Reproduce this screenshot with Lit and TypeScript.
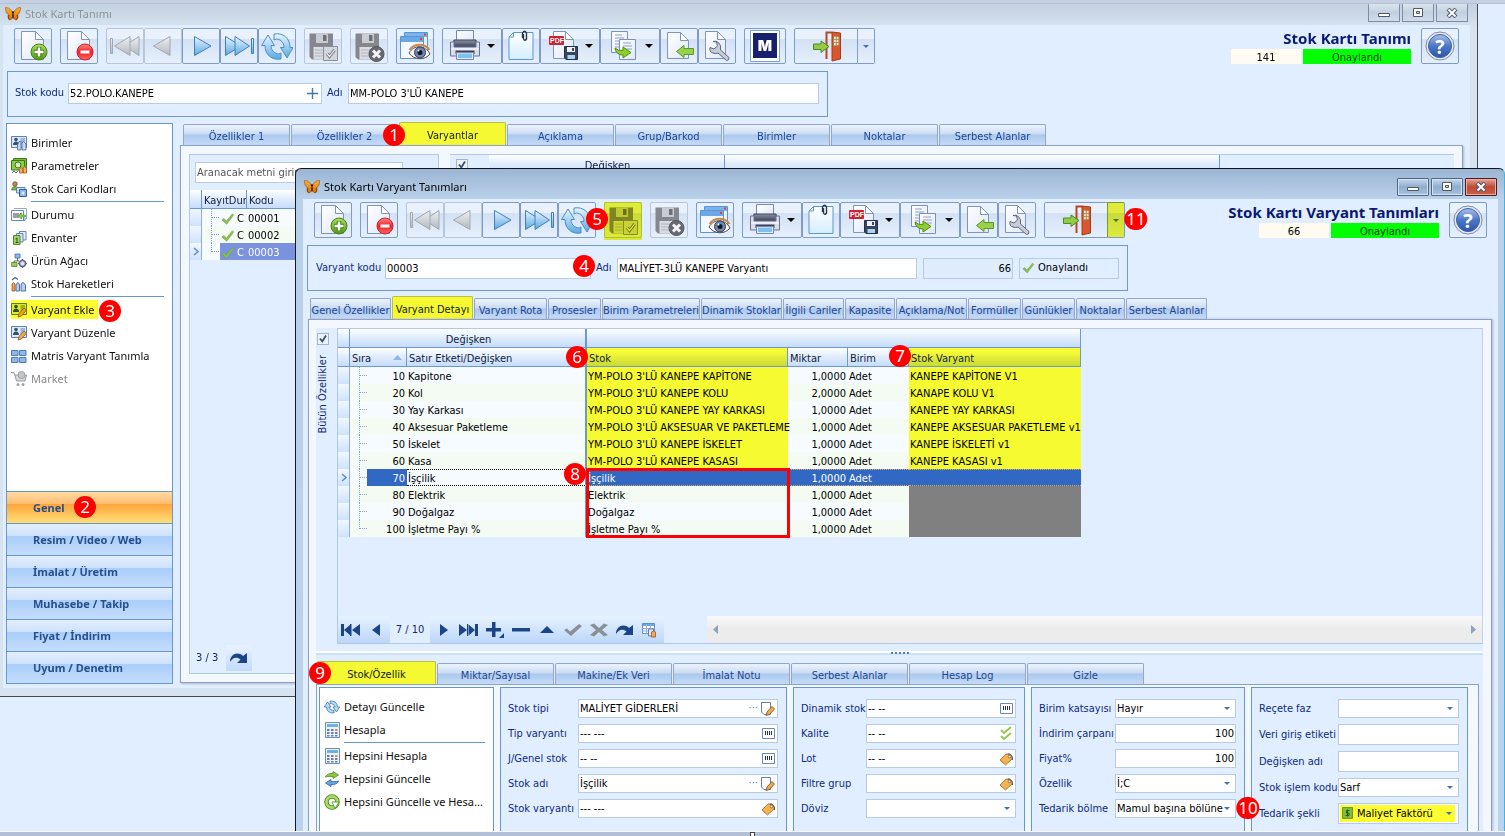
import { LitElement, html, svg, css, nothing } from "lit";
import { customElement, property } from "lit/decorators.js";
import { classMap } from "lit/directives/class-map.js";
import { styleMap } from "lit/directives/style-map.js";

/* ---------- shared look ---------- */

const base = css`
  * { box-sizing: border-box; }
  :host { font: 11px/14px "DejaVu Sans Condensed", "Noto Sans", sans-serif; color: #000; }
  button, input, select { font: inherit; color: inherit; margin: 0; }
  button { cursor: default; padding: 0; }
  svg { display: block; flex: none; }
  .row { display: flex; align-items: center; }
  input[type="text"], select {
    border: 1px solid #b5cbe8; background: #fff; height: 19px; padding: 0 1px; min-width: 0;
    border-radius: 0; outline: 0;
  }
  label { color: #0d2b80; white-space: nowrap; }
`;

const defs = html`<svg width="0" height="0" style="position:absolute" aria-hidden="true">
  <defs>
    <linearGradient id="blue" x1="0" y1="0" x2="0" y2="1"><stop offset="0" stop-color="#eaf6ff"/><stop offset="1" stop-color="#5aa9e0"/></linearGradient>
    <linearGradient id="gray" x1="0" y1="0" x2="0" y2="1"><stop offset="0" stop-color="#eceff3"/><stop offset="1" stop-color="#b4b8be"/></linearGradient>
    <linearGradient id="paper" x1="0" y1="0" x2="1" y2="1"><stop offset="0" stop-color="#ffffff"/><stop offset="1" stop-color="#dfe8f6"/></linearGradient>
    <linearGradient id="sheet" x1="0" y1="0" x2="0" y2="1"><stop offset="0" stop-color="#ffffff"/><stop offset="1" stop-color="#d5edff"/></linearGradient>
    <linearGradient id="green" x1="0" y1="0" x2="0" y2="1"><stop offset="0" stop-color="#a8e05a"/><stop offset="1" stop-color="#4f9a12"/></linearGradient>
    <linearGradient id="red" x1="0" y1="0" x2="0" y2="1"><stop offset="0" stop-color="#ff8a80"/><stop offset="0.5" stop-color="#f0202c"/><stop offset="1" stop-color="#ff6a60"/></linearGradient>
    <linearGradient id="steel" x1="0" y1="0" x2="0" y2="1"><stop offset="0" stop-color="#8d93a6"/><stop offset="1" stop-color="#3c4257"/></linearGradient>
    <linearGradient id="globe" x1="0" y1="0" x2="0" y2="1"><stop offset="0" stop-color="#a9c2ee"/><stop offset="0.5" stop-color="#4a76c8"/><stop offset="1" stop-color="#2f56ad"/></linearGradient>
    <linearGradient id="wing" x1="0" y1="0" x2="0" y2="1"><stop offset="0" stop-color="#ffb52e"/><stop offset="1" stop-color="#e06a08"/></linearGradient>
  </defs>
</svg>`;

/* ---------- large toolbar pictures, 32 x 32 ---------- */

const page = svg`<path d="M4.5 1.5H18.5L26.5 9.5V29.5H4.5Z" fill="url(#paper)" stroke="#8093bd"/><path d="M18.5 1.5V9.5H26.5Z" fill="#fff" stroke="#8093bd"/>`;
const disk = svg`<path d="M2.5 3.5H26V29.5H5L2.5 27Z" fill="#84888e"/><path d="M9 3.500H21V13H9Z" fill="#c9cdd2"/><path d="M16 5H19.500V11H16Z" fill="#6d7177"/><path d="M6.500 17H21.500V29.500H6.500Z" fill="#d8dbdf"/><path d="M8 20H20M8 23H20M8 26H20" stroke="#b2b6bb"/>`;

const big: Record<string, unknown> = {
  add: svg`${page}<circle cx="22" cy="22" r="8" fill="url(#green)" stroke="#4b7d22"/><path d="M22 17V27M17 22H27" stroke="#3f7a12" stroke-width="4.500"/><path d="M22 17.500V26.500M17.500 22H26.500" stroke="#fff" stroke-width="2.500"/>`,
  remove: svg`${page}<circle cx="22" cy="22" r="8" fill="url(#red)" stroke="#c3242c"/><path d="M17.500 22H26.500" stroke="#fff" stroke-width="3"/>`,
  first: svg`<g fill="url(#gray)" stroke="#a3a8b0"><path d="M30 6.500V25.500L15.500 16Z"/><path d="M21 6.500V25.500L5.500 16Z"/><path d="M1.500 8.500H3.500V23.500H1.500Z"/></g>`,
  prev: svg`<path d="M23 6.500V25.500L6.500 16Z" fill="url(#gray)" stroke="#a3a8b0"/>`,
  next: svg`<path d="M9.500 6.500V25.500L26 16Z" fill="url(#blue)" stroke="#3f7fc0"/>`,
  last: svg`<g fill="url(#blue)" stroke="#3f7fc0"><path d="M2.500 6.500V25.500L18 16Z"/><path d="M12 6.500V25.500L26.500 16Z"/><path d="M28.500 8.500H30.500V23.500H28.500Z"/></g>`,
  refresh: svg`<g fill="url(#blue)" stroke="#4a8fc6"><path d="M7 5L13.500 15.500H10C10 20 13 23.500 18 24L20 23V29C11 30.500 4 25 4 15.500H.5Z"/><path d="M26 28L19.500 17.500H23C23 12.500 20 9.500 15.500 9L13 10V4C22 2.500 29 8 29 17.500H32Z"/></g>`,
  save: svg`${disk}<path d="M16.500 16.500H30.500V30.500H16.500Z" fill="#d3d6da" stroke="#8c9096"/><path d="M20 23.500L22.500 26.500L27.500 20" fill="none" stroke="#787c82" stroke-width="3"/><path d="M20 23.500L22.500 26.500L27.500 20" fill="none" stroke="#f2f4f6" stroke-width="1.200"/>`,
  cancel: svg`${disk}<circle cx="23.500" cy="24" r="7.500" fill="#666a70" stroke="#53575d"/><path d="M20 20.500L27 27.500M27 20.500L20 27.500" stroke="#f4f4f4" stroke-width="3"/>`,
  preview: svg`<path d="M5.500 2.500H28.500V22H5.500Z" fill="#e9f3ff" stroke="#5b94d2"/><path d="M6 3H28V7H6Z" fill="#79b4ec"/><path d="M1.500 6.500H24.500V28.500H1.500Z" fill="#f2f8ff" stroke="#5b94d2"/><path d="M2 7H24V12H2Z" fill="#6aa9e6"/><path d="M25 3.500H27V5.500H25ZM21 8H23V10H21Z" fill="#e0402a"/><path d="M10 23C15 14.500 26 14.500 31 24C26 30.500 15 30.500 10 23Z" fill="#f4f4f6" stroke="#5c4a42"/><path d="M10.500 20C15 13 26 13 30.500 20" fill="none" stroke="#c98850" stroke-width="2"/><circle cx="21" cy="22.500" r="5.500" fill="#6f86ad" stroke="#33415e"/><circle cx="21" cy="22.500" r="2.500" fill="#101728"/><circle cx="19.500" cy="20.500" r="1" fill="#fff"/>`,
  print: svg`<path d="M7.500 .5H24.500V12H7.500Z" fill="url(#paper)" stroke="#7d86a6"/><path d="M5 10H27L28 17H4Z" fill="url(#steel)" stroke="#3a4056"/><path d="M1.500 12H5V17H27V12H30.500V26H1.500Z" fill="#d8dded" stroke="#6a7290"/><path d="M2 19H30" stroke="#fff"/><path d="M6.500 20.500H25.500V24H6.500Z" fill="#3c4257"/><path d="M7.500 22.500H24.500V29.500H7.500Z" fill="#dff0fd" stroke="#7d86a6"/><path d="M9 23.500H23V28H9Z" fill="#7fc0ee"/>`,
  clip: svg`<path d="M8.500 2.500H28V29.500H4V7Z" fill="url(#sheet)" stroke="#5b97d0"/><path d="M8.500 2.500V7H4Z" fill="#fff" stroke="#5b97d0"/><path d="M17.500 8V3Q19.500 -.5 21.500 3V9Q19.800 11.500 18.500 9V4" fill="none" stroke="#26364f" stroke-width="1.400"/>`,
  pdf: svg`<path d="M6.500 1.500H18.500L26.500 9.500V28.500H6.500Z" fill="url(#paper)" stroke="#8093bd"/><path d="M18.500 1.500V9.500H26.500Z" fill="#fff" stroke="#8093bd"/><rect x="2" y="6" width="15" height="9" rx="1" fill="#cf2230"/><text x="3" y="13" font-size="7" font-weight="700" font-family="Liberation Sans, sans-serif" fill="#fff">PDF</text><path d="M17.500 16.500H30.500V29.500H19L17.500 28Z" fill="#39445e" stroke="#262f45"/><path d="M20 17H28V22H20Z" fill="#eef2f8"/><path d="M25 18H27V21H25Z" fill="#39445e"/><path d="M20.500 25H28V29H20.500Z" fill="#a9d4f2"/>`,
  copy: svg`<path d="M4.500 1.500H20.500V22.500H4.500Z" fill="url(#paper)" stroke="#7b8fc0"/><path d="M8 5H15M8 8H17M8 11H17M8 14H17M8 17H15" stroke="#8ea1cc"/><path d="M12.500 9.500H28.500V29.500H12.500Z" fill="url(#paper)" stroke="#7b8fc0"/><path d="M16 13H24M16 16H25M16 19H25" stroke="#8ea1cc"/><path d="M8 18Q11 21 16 20.500V17L24 22.500L16 28V25Q9 25 8 18Z" fill="#8fce2c" stroke="#4f8a14"/>`,
  back: svg`<path d="M4.500 2.500H17.500L25.500 10.500V28.500H4.500Z" fill="url(#paper)" stroke="#8093bd"/><path d="M17.500 2.500V10.500H25.500Z" fill="#fff" stroke="#8093bd"/><path d="M13.500 21.500L21 15.500V18.500H30.500V24.500H21V27.500Z" fill="#9ad04c" stroke="#5a9a28"/>`,
  tools: svg`<path d="M4.500 1.500H16.500L24.500 9.500V28.500H4.500Z" fill="url(#paper)" stroke="#8093bd"/><path d="M16.500 1.500V9.500H24.500Z" fill="#fff" stroke="#8093bd"/><path d="M12 11.500L15.500 12L16.500 16L13 19L9 17.500Q8 22 12 23Q15 24 17 23L25.500 30.500Q28.500 30.500 28 27.500L19.500 20Q20.500 15 17.500 12.500Q15 10.500 12 11.500Z" fill="#c6ccd8" stroke="#5e6780"/>`,
  m: svg`<path d="M1.500 .5H30.500V31.500H1.500Z" fill="#fff" stroke="#7f9fd0"/><path d="M4 3H28V28H4Z" fill="#18206e"/><text x="16" y="21" text-anchor="middle" font-size="15" font-weight="900" font-family="Inter, sans-serif" fill="#fff">M</text>`,
  exit: svg`<path d="M16.500 29V2.500H22" fill="none" stroke="#b8472a" stroke-width="2"/><path d="M22 2L30.500 3V29L22 31Z" fill="#d9572a" stroke="#a83a18"/><path d="M23.500 6L29 6.500V15.500L23.500 16Z" fill="#f3e3c4" stroke="#b08050"/><path d="M26.300 6V16M23.500 9.500H29M23.500 12.500H29" stroke="#b08050" stroke-width=".8"/><path d="M3.500 14H11V11L19 16.500L11 22.500V19.500H3.500Z" fill="#93cc44" stroke="#4c8a20"/>`,
  help: svg`<circle cx="16" cy="16" r="14" fill="#e8ecf4" stroke="#7e8cab"/><circle cx="16" cy="16" r="11.500" fill="url(#globe)" stroke="#41609f"/><text x="16" y="23.500" text-anchor="middle" font-size="20" font-weight="700" font-family="Open Sans, sans-serif" fill="#fff">?</text>`,
};

const bigIcon = (n: string) => html`<svg width="32" height="32" viewBox="0 0 32 32" aria-hidden="true">${big[n]}</svg>`;

/* ---------- small pictures, 16 x 16 ---------- */

const pencil = svg`<path d="M7 15L8 11.500L13 6L15.500 8L10.500 14Z" fill="#f2a94a" stroke="#8a5526" stroke-width=".8"/>`;
const card = svg`<path d="M.5 1.500H15.500V12.500H.5Z" fill="#dfeaf9" stroke="#5b80b8"/><circle cx="5" cy="4.500" r="1.800" fill="#33517f"/><path d="M2 10Q2 6.500 5 6.500Q8 6.500 8 10Z" fill="#33517f"/><path d="M9.500 4H14M9.500 6H14M9.500 8H14" stroke="#5b80b8"/>`;
const calc = svg`<path d="M1.500 .5H15.500V15.500H1.500Z" fill="#eef3fb" stroke="#6d8cc0"/><path d="M3 2H14V5H3Z" fill="#6db0e4"/><g fill="#6a7fae"><path d="M3 7H5.500V9H3ZM7 7H9.500V9H7ZM3 10H5.500V12H3ZM7 10H9.500V12H7ZM3 13H5.500V14.500H3ZM7 13H9.500V14.500H7ZM11 13H13.500V14.500H11ZM11 10H13.500V12H11Z"/></g><path d="M11 7H13.500V9H11Z" fill="#e08a2c"/>`;
const check = svg`<path d="M1 9L3.500 7.500L6 10.500L13 2L14.500 3.500L6.500 14Z" fill="#8cc152" stroke="#6a9c38" stroke-width=".6"/>`;

const small: Record<string, unknown> = {
  birimler: svg`${card}<path d="M6.500 15V10L8 6.500H10V15ZM11 15V8L12.500 6.500L15 9V15Z" fill="#c7d8ef" stroke="#44679f" stroke-width=".8"/>`,
  param: svg`<path d="M2.500 .5H15.500V10H2.500Z" fill="#7dbb3c" stroke="#3f7a18"/><path d="M.5 2.500H13.500V12H.5Z" fill="#8fcb4c" stroke="#3f7a18"/><circle cx="7" cy="7" r="3" fill="#d6ecb4" stroke="#3f7a18"/><path d="M8.500 15V11Q10 8 12 11V15ZM12 15V10Q13.500 7.500 15.500 10V15Z" fill="#f4b060" stroke="#a3561c" stroke-width=".8"/><path d="M1 15L3 13L5 15L7 13" stroke="#3c6fb8" fill="none"/>`,
  cari: svg`<circle cx="4" cy="3" r="2.300" fill="#c08a50" stroke="#5c4426" stroke-width=".7"/><path d="M.5 9Q1 5.500 4 5.500Q7 5.500 7.500 9Z" fill="#7cb548" stroke="#447a20" stroke-width=".7"/><path d="M5.500 6.500H14V12H5.500Z" fill="#cfe0f5" stroke="#5b80b8"/><path d="M8.500 8.500H15.500V15.500H8.500Z" fill="#8bb6ea" stroke="#2f5fa8"/><path d="M10.500 12H13.500M12 10.500V14" stroke="#fff"/>`,
  durum: svg`<path d="M.5 3.500H12.500V13.500H.5Z" fill="#fff" stroke="#6c86b8"/><path d="M3 6V11M5 6V11M7 6V11M9.500 6V11" stroke="#2c3c60"/><path d="M3 1.500H15.500V12" fill="none" stroke="#8fa8d2"/><path d="M7 9L10.500 6V8H14.500V10H10.500V12Z" fill="#93cc44" stroke="#5a9a28" stroke-width=".7"/><path d="M5 13.500H14V11" fill="none" stroke="#4a8fd0"/>`,
  envanter: svg`<path d="M8.500 1.500H15V10H8.500Z" fill="#e6effb" stroke="#6285bb"/><path d="M5.500 3.500H12V12H5.500Z" fill="#d6e4f7" stroke="#6285bb"/><path d="M2.500 5.500H9V14.500H2.500Z" fill="#a8d26a" stroke="#4c8a28"/><path d="M4.500 12.500H7.500M6 12.500V8L4.500 8.800" stroke="#2d5c12" fill="none"/>`,
  agac: svg`<path d="M4 1H9V5H4Z" fill="#8db8ec" stroke="#3d6cb0" stroke-width=".8"/><path d="M6.500 5V8M3 10V8H8" stroke="#667" fill="none"/><path d="M.7 9.500H6V13.500H.7Z" fill="#9ccc58" stroke="#4c8a28" stroke-width=".8"/><circle cx="11.500" cy="10.500" r="3" fill="#e2e6ee" stroke="#5b6680" stroke-width="1.400"/><path d="M11.500 6V8M11.500 13V15M7 10.500H9M14 10.500H16" stroke="#5b6680" stroke-width="1.400"/>`,
  hareket: svg`<path d="M1 4L4 1.500L7 3.500" stroke="#3c6fb8" fill="none" stroke-width="1.200"/><path d="M1 15V8Q2.500 5 4 8V15Z" fill="#f0a050" stroke="#a3561c" stroke-width=".8"/><path d="M5 15V9Q7 4 8.500 9V15ZM10 15V9Q11.500 4 14.500 9V15Z" fill="#b9cfee" stroke="#44679f" stroke-width=".9"/>`,
  ekle: svg`${card}${pencil}`,
  duzenle: svg`${card}${pencil}`,
  matris: svg`<g fill="#8fb6e4" stroke="#4f7dba"><path d="M.5 2.500H7V7.500H.5ZM8.500 2.500H15V7.500H8.500ZM.5 9.500H7V14.500H.5ZM8.500 9.500H15V14.500H8.500Z"/></g>`,
  market: svg`<path d="M0 1.500H3L5.500 10H14L15.500 4H4" fill="#d6d8da" stroke="#9a9da0"/><circle cx="10.500" cy="4" r="3.500" fill="#c4c6c8" stroke="#a0a3a6"/><circle cx="7" cy="13.500" r="1.500" fill="#a0a3a6"/><circle cx="12" cy="13.500" r="1.500" fill="#a0a3a6"/>`,
  refresh: svg`<g fill="#b4dbf6" stroke="#3f78b2" stroke-width=".8"><path d="M3.500 3L7 8H5Q5.500 11 9 11.500L10 11V14Q3 14.500 2.500 8H.3Z"/><path d="M12.500 13L9 8H11Q10.500 5 7 4.500L6 5V2Q13 1.500 13.500 8H15.700Z"/></g>`,
  calc,
  sync: svg`<path d="M1.500 6Q3 2 9 2.500V.5L14.500 4L9 7.500V5.500Q5 5 1.500 6Z" fill="#8ccc3c" stroke="#4c8a20" stroke-width=".8"/><path d="M14.500 10Q13 14 7 13.500V15.500L1.500 12L7 8.500V10.500Q11 11 14.500 10Z" fill="#6aa6de" stroke="#2c62a4" stroke-width=".8"/>`,
  spin: svg`<circle cx="8" cy="8" r="5.500" fill="none" stroke="#4c8a20" stroke-width="4.500"/><circle cx="8" cy="8" r="5.500" fill="none" stroke="#a4dc60" stroke-width="2.800"/><path d="M8 8H15L11 14.500Z" fill="#fff" stroke="#4c8a20" stroke-width=".8"/>`,
  check,
  edit: svg`<path d="M1.500 1.500H10.500V13.500H4L1.500 11Z" fill="#fff" stroke="#6b7fa8"/><path d="M6 14.500L7 11L12 5.500L14.500 8L9.500 13.500Z" fill="#f2a94a" stroke="#7a4a20" stroke-width=".8"/>`,
  bars: svg`<path d="M2.500 2.500H14.500V12.500H2.500Z" fill="#fff" stroke="#7186b8"/><path d="M5.500 5V9M7.500 5V9M9.500 5V9M11.500 5V9" stroke="#26304c"/>`,
  checks: svg`<path d="M3 4L6 7L13 1M3 10L6 13L13 7" fill="none" stroke="#93c94e" stroke-width="2"/>`,
  tag: svg`<path d="M2 9L8 3H12L14 6V8L7.500 14Z" fill="#f4b250" stroke="#9a6420" stroke-width=".8"/><circle cx="11.500" cy="5.500" r="1.300" fill="#fff" stroke="#6a4a20" stroke-width=".7"/><path d="M10 3Q15 3 14.500 9" stroke="#556" fill="none"/>`,
};

const smallIcon = (n: string) => html`<svg width="16" height="16" viewBox="0 0 16 16" aria-hidden="true">${small[n]}</svg>`;

const butterfly = html`<svg width="16" height="16" viewBox="0 0 16 16" aria-hidden="true">
  <path d="M8 7C6 3 3 1.500 .5 1.500C.5 5 1.500 8 3.500 8.500C2.500 10 3 14 5 14C7 14 7.500 11 8 9C8.500 11 9 14 11 14C13 14 13.500 10 12.500 8.500C14.500 8 15.500 5 15.500 1.500C13 1.500 10 3 8 7Z" fill="url(#wing)" stroke="#8a4a10" stroke-width=".6"/>
  <path d="M7 5.500L8 7V12.500M9 5.500L8 7" stroke="#2a1608" stroke-width="1.200" fill="none"/><path d="M11.500 13.500C12.500 12.500 13 11 12 9M4.500 13.500C3.500 12.500 3 11 4 9" stroke="#7a3a08" fill="none"/></svg>`;

const curl = html`<svg width="20" height="14" viewBox="0 0 20 14" aria-hidden="true"><path d="M1 11C1 3 9 0 14 5L18 2V12H8L11.500 8.500C8 5.500 4 6 1 11Z" fill="#1c4587"/></svg>`;

/* ---------- toolbar ---------- */

interface Tool { icon: string; kind?: "menu" | "exit" | "wide"; off?: boolean; mark?: boolean; label: string }

const toolGroups = (brand: boolean, mark: boolean): Tool[][] => [
  [{ icon: "add", label: "Yeni" }],
  [{ icon: "remove", label: "Sil" }],
  [
    { icon: "first", label: "İlk", off: true }, { icon: "prev", label: "Önceki", off: true },
    { icon: "next", label: "Sonraki" }, { icon: "last", label: "Son" }, { icon: "refresh", label: "Yenile" },
  ],
  [{ icon: "save", label: "Kaydet", off: true, mark }],
  [{ icon: "cancel", label: "Vazgeç", off: true }],
  [{ icon: "preview", label: "Önizleme" }],
  [
    { icon: "print", label: "Yazdır", kind: "menu" }, { icon: "clip", label: "Ekler" },
    { icon: "pdf", label: "PDF", kind: "menu" }, { icon: "copy", label: "Kopyala", kind: "menu" },
    { icon: "back", label: "Geri al" }, { icon: "tools", label: "Ayarlar" },
  ],
  ...(brand ? [[{ icon: "m", label: "M", kind: "wide" } as Tool]] : []),
  [{ icon: "exit", label: "Çıkış", kind: "exit", mark }],
];

@customElement("erp-toolbar")
export class ErpToolbar extends LitElement {
  @property() heading = "";
  @property() code = "";
  @property({ type: Boolean }) brand = false;
  @property({ type: Boolean }) marked = false;

  static styles = [base, css`
    :host { display: flex; justify-content: space-between; padding: 3px 11px 0; }
    .tools { display: flex; gap: 8px; }
    .group { display: flex; }
    button {
      width: 38px; height: 36px; display: flex; align-items: center; justify-content: center; position: relative;
      border: 1px solid #7f9cc8; border-radius: 2px;
      background: linear-gradient(#e9f1fc 0 28%, #d3e1f4 30%, #e6f0fd);
    }
    button.off { border-color: #b9c5d8; }
    button.wide { width: 42px; }
    button.menu { width: 60px; justify-content: flex-start; padding-left: 6px; gap: 6px; }
    button.exit { width: 64px; border-radius: 2px 0 0 2px; }
    button.drop { width: 17px; border-left: 0; border-radius: 0 2px 2px 0; }
    button.mark::after { content: ""; position: absolute; inset: -1px -1px -3px; background: #f4f93a; mix-blend-mode: multiply; }
    button.drop.mark::after { inset: -1px 0 0 -1px; }
    .status { display: flex; gap: 10px; }
    h1 { margin: 0 0 1px; font: 700 15px/20px "Noto Sans", sans-serif; color: #0a1a70; text-align: right; white-space: nowrap; }
    .chips { display: flex; justify-content: flex-end; gap: 2px; line-height: 15px; text-align: center; }
    .chips span { padding-top: 1px; height: 15px; }
    .code { width: 70px; background: #fffbf0; }
    .ok { width: 108px; background: #0f0; color: #063a06; }
  `];

  private tool(t: Tool) {
    const cls = { off: !!t.off, menu: t.kind === "menu", wide: t.kind === "wide", exit: t.kind === "exit", mark: !!t.mark && t.kind !== "exit" };
    return html`<button class=${classMap(cls)} aria-label=${t.label}>${bigIcon(t.icon)}
      ${t.kind === "menu" ? html`<svg width="8" height="4" viewBox="0 0 8 4"><path d="M0 0H8L4 4Z"/></svg>` : nothing}</button>
      ${t.kind === "exit" ? html`<button class=${classMap({ drop: true, mark: !!t.mark })} aria-label="Seçenekler"><svg width="6" height="3" viewBox="0 0 6 3"><path d="M0 0H6L3 3Z" fill="#4a6fa8"/></svg></button>` : nothing}`;
  }

  render() {
    return html`${defs}
      <div class="tools">${toolGroups(this.brand, this.marked).map(g => html`<div class="group">${g.map(t => this.tool(t))}</div>`)}</div>
      <div class="status">
        <div><h1>${this.heading}</h1><div class="chips"><span class="code">${this.code}</span><span class="ok">Onaylandı</span></div></div>
        <button aria-label="Yardım">${bigIcon("help")}</button>
      </div>`;
  }
}

/* ---------- tab strip ---------- */

interface Tab { text: string; width: number; active?: boolean }

@customElement("erp-tabs")
export class ErpTabs extends LitElement {
  @property({ attribute: false }) tabs: Tab[] = [];

  static styles = [base, css`
    :host { display: flex; align-items: flex-end; height: 23px; }
    button {
      height: 21px; border: 1px solid #93a6cb; border-bottom: 0; border-radius: 2px 2px 0 0; margin-right: 1px;
      background: linear-gradient(#e8f0fb 0 8%, #c9dbf3 45%, #abc8ee 50%, #c6dcf7); color: #1f4592; white-space: nowrap;
      flex: none; overflow: hidden; padding-top: 3px;
    }
    button.active { height: 23px; background: #f5f932; border-color: #b9bf4c; color: #10200a; }
  `];

  render() {
    return this.tabs.map(t => html`<button role="tab" class=${classMap({ active: !!t.active })} style=${styleMap({ width: `${t.width - 1}px` })}>${t.text}</button>`);
  }
}

/* ---------- data ---------- */

const menu: (null | [string, string, string?])[] = [
  ["birimler", "Birimler"], ["param", "Parametreler"], ["cari", "Stok Cari Kodları"], null,
  ["durum", "Durumu"], ["envanter", "Envanter"], ["agac", "Ürün Ağacı"], ["hareket", "Stok Hareketleri"], null,
  ["ekle", "Varyant Ekle", "mark"], ["duzenle", "Varyant Düzenle"], ["matris", "Matris Varyant Tanımla"], ["market", "Market", "off"],
];

const sections = ["Genel", "Resim / Video / Web", "İmalat / Üretim", "Muhasebe / Takip", "Fiyat / İndirim", "Uyum / Denetim"];

const mainTabs: Tab[] = ["Özellikler 1", "Özellikler 2", "Varyantlar", "Açıklama", "Grup/Barkod", "Birimler", "Noktalar", "Serbest Alanlar"]
  .map(text => ({ text, width: 108, active: text === "Varyantlar" }));

const dialogTabs: Tab[] = ([
  ["Genel Özellikler", 82], ["Varyant Detayı", 82], ["Varyant Rota", 74], ["Prosesler", 54], ["Birim Parametreleri", 99],
  ["Dinamik Stoklar", 82], ["İlgili Cariler", 62], ["Kapasite", 51], ["Açıklama/Not", 72], ["Formüller", 54],
  ["Günlükler", 54], ["Noktalar", 50], ["Serbest Alanlar", 82],
] as [string, number][]).map(([text, width]) => ({ text, width, active: text === "Varyant Detayı" }));

const detailTabs: Tab[] = ["Stok/Özellik", "Miktar/Sayısal", "Makine/Ek Veri", "İmalat Notu", "Serbest Alanlar", "Hesap Log", "Gizle"]
  .map((text, i) => ({ text, width: i ? 118 : 120, active: !i }));

const lines: [number, string, string, string, string][] = [
  [10, "Kapitone", "YM-POLO 3'LÜ KANEPE KAPİTONE", "1,0000", "KANEPE KAPİTONE V1"],
  [20, "Kol", "YM-POLO 3'LÜ KANEPE KOLU", "2,0000", "KANAPE KOLU V1"],
  [30, "Yay Karkası", "YM-POLO 3'LÜ KANEPE YAY KARKASI", "1,0000", "KANEPE YAY KARKASI"],
  [40, "Aksesuar Paketleme", "YM-POLO 3'LÜ AKSESUAR VE PAKETLEME", "1,0000", "KANEPE AKSESUAR PAKETLEME v1"],
  [50, "İskelet", "YM-POLO 3'LÜ KANEPE İSKELET", "1,0000", "KANEPE İSKELETİ v1"],
  [60, "Kasa", "YM-POLO 3'LÜ KANEPE KASASI", "1,0000", "KANEPE KASASI v1"],
  [70, "İşçilik", "İşçilik", "1,0000", ""],
  [80, "Elektrik", "Elektrik", "1,0000", ""],
  [90, "Doğalgaz", "Doğalgaz", "1,0000", ""],
  [100, "İşletme Payı %", "İşletme Payı %", "1,0000", ""],
];

interface Field { id: string; label: string; value: string; icon?: string; dots?: boolean; select?: boolean; right?: boolean; tall?: boolean; mark?: boolean }

const groups: { name: string; fields: Field[] }[] = [
  { name: "stock", fields: [
    { id: "tip", label: "Stok tipi", value: "MALİYET GİDERLERİ", icon: "edit", dots: true },
    { id: "tipv", label: "Tip varyantı", value: "--- ---", icon: "bars" },
    { id: "genel", label: "J/Genel stok", value: "-- --", icon: "bars" },
    { id: "adi", label: "Stok adı", value: "İşçilik", icon: "edit", dots: true },
    { id: "var", label: "Stok varyantı", value: "--- ---", icon: "tag" },
  ] },
  { name: "dynamic", fields: [
    { id: "din", label: "Dinamik stok", value: "-- --", icon: "bars" },
    { id: "kal", label: "Kalite", value: "-- --", icon: "checks" },
    { id: "lot", label: "Lot", value: "-- --", icon: "tag" },
    { id: "fil", label: "Filtre grup", value: "", icon: "tag" },
    { id: "dov", label: "Döviz", value: "", select: true },
  ] },
  { name: "price", fields: [
    { id: "kat", label: "Birim katsayısı", value: "Hayır", select: true },
    { id: "ind", label: "İndirim çarpanı", value: "100", right: true },
    { id: "fiy", label: "Fiyat%", value: "100", right: true },
    { id: "ozl", label: "Özellik", value: "İ;C", select: true },
    { id: "bol", label: "Tedarik bölme", value: "Mamul başına bölüne", select: true },
  ] },
  { name: "supply", fields: [
    { id: "faz", label: "Reçete faz", value: "", select: true },
    { id: "eti", label: "Veri giriş etiketi", value: "", tall: true },
    { id: "deg", label: "Değişken adı", value: "", tall: true },
    { id: "kod", label: "Stok işlem kodu", value: "Sarf", select: true },
    { id: "sek", label: "Tedarik şekli", value: "Maliyet Faktörü", select: true, mark: true },
  ] },
];

/* Numbered guide marks: number, centre x, centre y */
const marks: [number, number, number][] = [
  [1, 394, 135], [2, 85, 507], [3, 110, 311], [4, 584, 266], [5, 597, 219], [6, 577, 357],
  [7, 900, 356], [8, 575, 474], [9, 320, 673], [10, 1248, 808], [11, 1136, 219],
];

/* ---------- page ---------- */

@customElement("app-root")
export class AppRoot extends LitElement {
  static styles = [base, css`
    :host { display: block; position: relative; height: 100vh; overflow: hidden; background: #e1eeff; }
    .desk-top { height: 4px; background: #c6cfe2; border-bottom: 1px solid #b2c3da; }
    .desk-bottom { position: absolute; inset: auto 0 0; height: 5px; background: #b3bfd5; border-top: 1px solid #f6faff; }
    .desk-bottom i { display: block; width: 5px; height: 4px; margin: 0 auto; background: #fff; border: 1px solid #444; border-bottom: 0; }

    /* windows */
    .win { position: absolute; display: flex; flex-direction: column; }
    .win.main { inset: 4px 27px 139px 0; border: solid #4a4a4a; border-width: 0 1px 1px 0; background: #d6e3f1; padding: 0 7px 8px 3px; }
    .win.dialog { inset: 168px 0 5px 295px; border: 1px solid #14181e; border-right-color: #3ab6e0; border-bottom: 0; border-radius: 6px 6px 0 0; background: linear-gradient(#9bb5d3, #bad1ea 30px 300px, #bad3ec); padding: 0 6px 0 7px; }
    .title, .nav, .actions, .guide { font-family: "Noto Sans", sans-serif; }
    .title { display: flex; align-items: center; gap: 4px; line-height: 16px; }
    .main .title { height: 21px; color: #8c929b; margin: 0 -7px 0 -3px; padding: 0 9px 2px 5px; background: linear-gradient(#c3d1e0, #d4e1ee); }
    .dialog .title { height: 30px; padding: 6px 1px 0 1px; }
    .winbtns { display: flex; gap: 2px; margin-left: auto; align-self: flex-start; }
    .winbtns button { width: 32px; height: 18px; border: 1px solid #7c8ca6; border-radius: 1px; background: linear-gradient(#dbe5f0, #c3d0df 50%, #d0dce9); display: grid; place-items: center; }
    .main .winbtns button { border-top: 0; }
    .dialog .winbtns { margin-top: 3px; }
    .dialog .winbtns button { border-color: #4f6686; background: linear-gradient(#c5d7ec, #8fadcf 50%, #a9c3e0); box-shadow: inset 0 0 0 1px #d5e2f0; }
    .dialog .winbtns button.close { border-color: #501818; background: linear-gradient(#e3a497, #c14a33 50%, #c9604a); box-shadow: inset 0 0 0 1px #e6b0a6; }
    .body { flex: 1; min-height: 0; display: flex; flex-direction: column; background: #e1eeff; }

    /* key fields */
    .keys { display: flex; align-items: center; height: 46px; border: 1px solid #6f97d0; padding: 0 8px 2px 7px; margin: 7px 0 0 4px; width: 821px; }
    .dialog .keys { padding: 0 8px; }
    .keys input { height: 21px; padding-top: 1px; }
    .keys .gap5 { margin-right: 5px; }
    .plus { position: relative; display: flex; align-items: center; }
    .plus svg { position: absolute; right: 4px; top: 5px; }
    .w21 { width: 21px; } .w53 { width: 53px; } .w69 { width: 69px; }
    .w254 { width: 254px; } .w471 { width: 471px; } .w206 { width: 206px; } .w300 { width: 300px; }
    .keys .ro { background: #dfecfc; text-align: right; width: 90px; margin: 0 6px; }
    .keys .state { width: 100px; height: 21px; border: 1px solid #b5cbe8; display: flex; align-items: center; gap: 3px; padding: 0 2px; }
    .state svg { width: 13px; }

    /* left navigation */
    .split { flex: 1; min-height: 0; display: flex; padding: 5px 7px 3px 3px; gap: 7px; }
    .nav { width: 167px; flex: none; display: flex; flex-direction: column; border: 1px solid #6797d0; background: #fff; margin: 1px 0; }
    .menu { flex: 1; padding: 9px 4px; }
    .menu a { display: flex; align-items: center; height: 19px; gap: 4px; margin-bottom: 4px; color: #101010; text-decoration: none; width: max-content; padding-right: 3px; white-space: nowrap; }
    .menu a.mark { background: #fdfd30; }
    .menu a.mark svg { mix-blend-mode: multiply; }
    .menu a.off { color: #8a8a8a; }
    .menu hr { border: 0; border-top: 1px solid #6797d0; margin: -1px 4px 3px 20px; }
    .nav button { display: block; width: 100%; height: 32px; text-align: left; white-space: nowrap; padding: 0 26px; border: 0; border-top: 1px solid #6797d0; font-weight: 700; color: #24508c; background: linear-gradient(#e2effe, #cfe2fc 37%, #aacdfb 39%, #c4ddfc); }
    .nav button.on { background: linear-gradient(#ffd9a3, #ffbf73 37%, #ffa43a 39%, #ffe07a); }

    /* variants page */
    .tabpage { flex: 1; min-width: 0; display: flex; flex-direction: column; margin-bottom: 2px; }
    .tabpage erp-tabs { padding-left: 3px; }
    .sheet { flex: 1; min-height: 0; display: flex; gap: 7px; border: 1px solid #8f9fc6; background: #f3f8ff; padding: 8px; box-shadow: 1px 1px 2px #a9b8d4; }
    .pick { width: 250px; flex: none; display: flex; flex-direction: column; border: 1px solid #b3c8e4; background: #e1eeff; }
    .pick input { width: 208px; height: 21px; margin: 7px 5px; color: #555; flex: none; }
    .foot { margin-top: auto; padding: 0 6px 2px; display: flex; align-items: center; gap: 8px; color: #14286e; }
    .foot span.c { background: linear-gradient(#e8f3ff, #c3dafa); padding: 6px 3px; height: 26px; }
    .behind { flex: 1; border-top: 1px solid #b3c8e4; background: #e1eeff; display: flex; margin-left: 4px; }
    .strip { width: 21px; flex: none; display: flex; flex-direction: column; align-items: center; padding: 5px 7px 0 0; gap: 10px; color: #14286e; }
    .behind .strip { width: 39px; padding: 4px 16px 0 0; }
    .behind table { width: 731px; align-self: flex-start; }
    .strip span { writing-mode: vertical-rl; transform: rotate(180deg); }
    input[type="checkbox"] { appearance: none; width: 12px; height: 12px; border: 1px solid #a3b4cc; background: #eef2f7 url('data:image/svg+xml,<svg xmlns="http://www.w3.org/2000/svg" viewBox="0 0 10 10"><path d="M2 4.500L4.300 7.500L8 1.500" fill="none" stroke="%2338506f" stroke-width="1.800"/></svg>'); }

    /* grids */
    table { border-collapse: separate; border-spacing: 0; table-layout: fixed; }
    th { height: 19px; padding: 3px 0 0 2px; text-align: left; font-weight: 400; color: #101c40; background: linear-gradient(#fff, #e2eefe 45%, #c6dcfb); border-right: 1px solid #6f97d0; border-bottom: 1px solid #6f97d0; white-space: nowrap; overflow: hidden; }
    th.mid { text-align: center; }
    td { height: 17px; padding: 2px 0 0 1px; line-height: 15px; white-space: nowrap; }
    tbody tr { background: #f5fbff; }
    tbody tr:nth-child(even) { background: #f3fbf2; }
    td.ind { padding: 0; border-right: 1px solid #8fb0de; background: linear-gradient(#f1f7ff, #d0e2fb); }
    td.ind svg { margin-left: 3px; }
    td.num { text-align: right; padding-right: 2px; }
    td.tree { position: relative; }
    td.tree::before { content: ""; position: absolute; left: 9px; top: 0; bottom: 0; width: 8px; border-left: 1px dotted #7f9fce; background: linear-gradient(90deg, #7f9fce 1px, transparent 1px) 0 8px / 2px 1px repeat-x; }
    tr:last-child td.tree::before { bottom: 8px; }
    .small { width: 110px; }
    .pickcell { gap: 2px; padding-left: 18px; height: 15px; }
    .small tr.sel td.tree { background: linear-gradient(90deg, transparent 18px, #7b93dc 18px); }
    .small tr.sel td { color: #fff; }
    .small tr.sel td.code { background: #7b93dc; }
    .small svg { width: 14px; }
    .small td.ind svg { width: 7px; }

    /* dialog page */
    .dialog erp-tabs { padding-left: 7px; margin-top: 5px; }
    .dsheet { flex: 1; min-height: 0; margin: 0 6px 0 5px; padding: 8px 8px 0 7px; border: 1px solid #8f9fc6; border-bottom: 0; background: #f3f8ff; box-shadow: 1px 0 2px #a9b8d4; display: flex; flex-direction: column; }
    .upper { flex: 1; min-height: 0; display: flex; background: #e1eeff; }
    .gridbox { flex: 1; min-width: 0; display: flex; flex-direction: column; border: 1px solid #b3c8e4; border-right-color: #c3d4ea; }
    .lines { width: 743px; }
    .lines .thick { border-right: 2px solid #6f97d0; }
    .lines th.mark { background: linear-gradient(#f8fc36 20%, #c8da38); }
    .lines th svg { float: right; margin: 3px 4px; }
    .lines td.mark { background: #f6fa30; }
    .lines td.na { background: #808080; }
    .lines tr.sel td:not(.ind):not(.edit) { background: #3068c4; color: #fff; border-top: 1px dotted #e0a850; border-bottom: 1px dotted #e0a850; line-height: 13px; }
    .lines tr.sel td.tree { background: linear-gradient(90deg, #f5fbff 17px, #3068c4 17px) !important; border: 0 !important; line-height: 15px !important; }
    .lines tr.sel td.edit { border-top: 1px dotted #000; border-bottom: 1px dotted #000; line-height: 13px; }
    .pager { margin-top: auto; height: 27px; display: flex; align-items: stretch; }
    .pager .btns { display: flex; align-items: center; background: linear-gradient(#e6f2ff, #bcd7fa); }
    .pager .btns button { width: 26px; height: 27px; border: 0; background: none; display: grid; place-items: center; }
    .pager .pos { width: 40px; align-self: center; text-align: center; color: #14286e; }
    .scroll { flex: 1; margin-left: 43px; background: linear-gradient(#f8f8f8, #ececec 50%); display: flex; justify-content: space-between; align-items: center; padding: 0 5px; }
    .gapbar { height: 17px; background: #e1eeff; border-top: 7px solid #e1eeff; }
    .gapbar::before { content: ""; display: block; height: 4px; background: linear-gradient(#fff 2px, #cbe1fb 2px); }
    .gapbar::after { content: ""; display: block; width: 18px; height: 2px; margin: -3px auto 0; background: repeating-linear-gradient(90deg, #4f80c6 0 2px, transparent 2px 4px); }

    .lower { flex: none; height: 170px; overflow: hidden; background: #e1eeff; display: flex; flex-direction: column; }
    .dialog .lower erp-tabs { margin: 0; padding-left: 1px; }
    .detail { flex: 1; min-height: 0; display: flex; gap: 6px; border: 1px solid #8f9fc6; border-bottom: 0; background: #f3f8ff; padding: 2px 9px 0 2px; margin-right: 4px; }
    .actions, .fields { border: 1px solid #6797d0; border-bottom: 0; }
    .actions { width: 175px; background: #fff; padding: 9px 4px; }
    .actions a { display: flex; gap: 4px; height: 19px; align-items: center; margin-bottom: 4px; color: #101010; text-decoration: none; white-space: nowrap; }
    .actions hr { border: 0; border-top: 1px solid #6797d0; margin: -1px 4px 3px 20px; }
    .fields { padding: 11px 8px 0 7px; background: #e1eeff; display: grid; gap: 6px; align-content: start; }
    .fields.stock { width: 287px; grid-template-columns: 64px 200px; } 
    .fields.dynamic { width: 232px; grid-template-columns: 59px 150px; }
    .fields.price { width: 214px; grid-template-columns: 70px 121px; }
    .fields.supply { width: 217px; grid-template-columns: 73px 121px; }
    .fields label { align-self: center; }
    .box { position: relative; display: flex; }
    .box input, .box select { width: 100%; appearance: none; }
    .box.tall input { height: 21px; }
    .box .r { text-align: right; }
    .box > svg, .box > b { position: absolute; top: 2px; right: 2px; }
    .box > b { right: 20px; font-weight: 400; color: #4f80c6; }
    .box > svg.arr { top: 8px; right: 6px; }
    .box.mark { background: #fff; border: 1px solid #b5cbe8; padding: 1px 3px 1px 1px; }
    .box.mark select { border: 0; height: 17px; background: #fcfc30; padding-left: 17px; }
    .box.mark > svg.pay { left: 3px; top: 3px; right: auto; }

    /* guide marks */
    .guide { position: absolute; transform: translate(-50%, -50%); min-width: 22px; height: 22px; padding: 0 2px; border-radius: 12px; background: #fe0000; color: #fff; font-size: 17px; line-height: 21px; text-align: center; }
    .frame { position: absolute; left: 586px; top: 468px; width: 204px; height: 70px; border: 3px solid #fe0000; }
  `];

  private winButtons = html`<div class="winbtns">
    <button aria-label="Küçült"><svg width="12" height="10" viewBox="0 0 12 10"><path d="M.5 5.500H11.500V8.500H.5Z" fill="#fff" stroke="#50586a"/></svg></button>
    <button aria-label="Büyüt"><svg width="12" height="10" viewBox="0 0 12 10"><path d="M1.500 .5H10.500V8.500H1.500Z" fill="#fff" stroke="#50586a"/><path d="M4.500 3.500H7.500V5.500H4.500Z" fill="#c9d4e2" stroke="#50586a"/></svg></button>
    <button class="close" aria-label="Kapat"><svg width="12" height="10" viewBox="0 0 12 10"><path d="M2 1L10 9M10 1L2 9" stroke="#50586a" stroke-width="4"/><path d="M2.500 1.500L9.500 8.500M9.500 1.500L2.500 8.500" stroke="#fff" stroke-width="2"/></svg></button>
  </div>`;

  private cursor = html`<svg width="7" height="9" viewBox="0 0 7 9"><path d="M1 1L5 4.500L1 8" fill="none" stroke="#5f8fd2" stroke-width="1.600"/></svg>`;

  private field(f: Field) {
    const arrow = html`<svg class="arr" width="6" height="3" viewBox="0 0 6 3"><path d="M0 0H6L3 3Z" fill="#4a6fa8"/></svg>`;
    return html`<label for=${f.id}>${f.label}</label>
      <div class=${classMap({ box: true, tall: !!f.tall, mark: !!f.mark })}>
        ${f.select
          ? html`<select id=${f.id}><option>${f.value}</option></select>${arrow}`
          : html`<input type="text" id=${f.id} class=${f.right ? "r" : ""} .value=${f.value}>`}
        ${f.dots ? html`<b>···</b>` : nothing}
        ${f.icon ? smallIcon(f.icon) : nothing}
        ${f.mark ? html`<svg class="pay" width="11" height="12" viewBox="0 0 11 12"><path d="M.5 .5H10.500V11.500H.5Z" fill="#86b93a" stroke="#6a9a28"/><path d="M7.500 3.500H4.500V6H7V8.500H3.500M5.500 2.500V9.500" stroke="#2e5c12" fill="none"/></svg>` : nothing}
      </div>`;
  }

  private mainWindow() {
    return html`<section class="win main">
      <div class="title">${butterfly}<span>Stok Kartı Tanımı</span>${this.winButtons}</div>
      <div class="body">
        <erp-toolbar heading="Stok Kartı Tanımı" code="141" brand></erp-toolbar>
        <div class="keys">
          <label for="code" class="w53">Stok kodu</label>
          <div class="plus gap5"><input id="code" class="w254" type="text" value="52.POLO.KANEPE"><svg width="11" height="11" viewBox="0 0 11 11"><path d="M5.500 0V11M0 5.500H11" stroke="#3f78b8" stroke-width="1.400"/></svg></div>
          <label for="name" class="w21">Adı</label>
          <input id="name" class="w471" type="text" value="MM-POLO 3'LÜ KANEPE">
        </div>
        <div class="split">
          <nav class="nav">
            <div class="menu">${menu.map(m => m ? html`<a href="#" class=${m[2] ?? ""}>${smallIcon(m[0])}${m[1]}</a>` : html`<hr>`)}</div>
            ${sections.map((s, i) => html`<button class=${i ? "" : "on"}>${s}</button>`)}
          </nav>
          <div class="tabpage">
            <erp-tabs .tabs=${mainTabs}></erp-tabs>
            <div class="sheet">
              <div class="pick">
                <input type="text" aria-label="Ara" value="Aranacak metni girin">
                <table class="small">
                  <colgroup><col style="width:12px"><col style="width:45px"><col></colgroup>
                  <thead><tr><th></th><th>KayıtDur</th><th>Kodu</th></tr></thead>
                  <tbody>${["00001", "00002", "00003"].map((c, i) => html`<tr class=${i === 2 ? "sel" : ""}>
                    <td class="ind">${i === 2 ? this.cursor : nothing}</td><td class="tree"><div class="row pickcell">${smallIcon("check")}C</div></td><td class="code">${c}</td></tr>`)}</tbody>
                </table>
                <div class="foot">3 / 3 <span class="c">${curl}</span></div>
              </div>
              <div class="behind">
                <div class="strip"><input type="checkbox" aria-label="Bütün Özellikler" checked></div>
                <table><colgroup><col style="width:236px"><col></colgroup><thead><tr><th class="mid">Değişken</th><th></th></tr></thead></table>
              </div>
            </div>
          </div>
        </div>
      </div>
    </section>`;
  }

  private pager() {
    const b = "#1c4587";
    const g = "#8b9097";
    const ic = (label: string, p: unknown) => html`<button aria-label=${label}><svg width="20" height="16" viewBox="0 0 20 16">${p}</svg></button>`;
    return html`<div class="pager">
      <div class="btns">
        ${ic("İlk", svg`<path d="M0 2H3V14H0ZM10 2V14L3 8ZM19 2V14L11 8ZM9 2H10.500V14H9Z" fill=${b}/>`)}
        ${ic("Önceki", svg`<path d="M13 2V14L5 8Z" fill=${b}/>`)}
      </div>
      <span class="pos">7 / 10</span>
      <div class="btns">
        ${ic("Sonraki", svg`<path d="M7 2V14L15 8Z" fill=${b}/>`)}
        ${ic("Son", svg`<path d="M16 2H19V14H16ZM0 2V14L8 8ZM9 2V14L16 8ZM8 2H9.500V14H8Z" fill=${b}/>`)}
        ${ic("Ekle", svg`<path d="M7 0H10.500V6H16V9.500H10.500V15H7V9.500H1V6H7ZM19 11V16H14Z" fill=${b}/>`)}
        ${ic("Sil", svg`<path d="M1 6H19V9.500H1Z" fill=${b}/>`)}
        ${ic("Düzenle", svg`<path d="M3 11L10 4L17 11Z" fill=${b}/>`)}
        ${ic("Onayla", svg`<path d="M1 8L4 6.500L7 9.500L16 2L19 4L8 14Z" fill=${g}/>`)}
        ${ic("Vazgeç", svg`<path d="M1 3L5 1.500L10 6L15 1.500L19 3L13 8L19 13L15 14.500L10 10L5 14.500L1 13L7 8Z" fill=${g}/>`)}
        ${ic("Yenile", svg`<path d="M1 12C1 4 9 1 14 6L18 3V13H8L11.500 9.500C8 6.500 4 7 1 12Z" fill=${b}/>`)}
        ${ic("Sütunlar", svg`<path d="M1.500 1.500H13.500V11.500H1.500Z" fill="#fff" stroke="#5b8fd0"/><path d="M2 2H13V4H2Z" fill="#6aa6e0"/><path d="M1.500 6.500H13.500M1.500 9H13.500M5.500 2V11.500M9.500 2V11.500" stroke="#8fb3e0"/><path d="M7.500 7H12.500V14H7.500Z" fill="#e2e6f0" stroke="#6b7fa8"/><path d="M10.500 10V15H14.500V10Q12.500 8 10.500 10Z" fill="#f2a860" stroke="#a3561c" stroke-width=".8"/>`)}
      </div>
      <div class="scroll">
        <svg width="6" height="9" viewBox="0 0 6 9"><path d="M6 0V9L1 4.500Z" fill="#8fa0c4"/></svg>
        <svg width="6" height="9" viewBox="0 0 6 9"><path d="M0 0V9L5 4.500Z" fill="#8fa0c4"/></svg>
      </div>
    </div>`;
  }

  private dialog() {
    return html`<section class="win dialog">
      <div class="title">${butterfly}<span>Stok Kartı Varyant Tanımları</span>${this.winButtons}</div>
      <div class="body">
        <erp-toolbar heading="Stok Kartı Varyant Tanımları" code="66" marked></erp-toolbar>
        <div class="keys">
          <label for="vcode" class="w69">Varyant kodu</label>
          <input id="vcode" class="w206 gap5" type="text" value="00003">
          <label for="vname" class="w21">Adı</label>
          <input id="vname" class="w300" type="text" value="MALİYET-3LÜ KANEPE Varyantı">
          <input class="ro" type="text" aria-label="No" value="66" readonly>
          <span class="state">${smallIcon("check")}Onaylandı</span>
        </div>
        <erp-tabs .tabs=${dialogTabs}></erp-tabs>
        <div class="dsheet">
          <div class="upper">
            <div class="strip"><input type="checkbox" aria-label="Bütün Özellikler" checked><span>Bütün Özellikler</span></div>
            <div class="gridbox">
              <table class="lines">
                <colgroup><col style="width:12px"><col style="width:57px"><col style="width:180px"><col style="width:201px"><col style="width:60px"><col style="width:61px"><col></colgroup>
                <thead>
                  <tr><th></th><th colspan="2" class="mid thick">Değişken</th><th colspan="4"></th></tr>
                  <tr><th></th><th>Sıra<svg width="9" height="5" viewBox="0 0 9 5"><path d="M0 5H9L4.500 0Z" fill="#8fb6e8"/></svg></th><th class="thick">Satır Etketi/Değişken</th><th class="mark">Stok</th><th>Miktar</th><th>Birim</th><th class="mark">Stok Varyant</th></tr>
                </thead>
                <tbody>${lines.map(([n, name, stock, qty, variant]) => html`<tr class=${n === 70 ? "sel" : ""}>
                  <td class="ind">${n === 70 ? this.cursor : nothing}</td>
                  <td class="num tree">${n}</td>
                  <td class=${classMap({ thick: true, edit: n === 70 })}>${name}</td>
                  <td class=${n < 70 ? "mark" : ""}>${stock}</td>
                  <td class="num">${qty}</td><td>Adet</td>
                  <td class=${n < 70 ? "mark" : n > 70 ? "na" : ""}>${variant}</td></tr>`)}</tbody>
              </table>
              ${this.pager()}
            </div>
          </div>
          <div class="gapbar"></div>
          <div class="lower">
            <erp-tabs .tabs=${detailTabs}></erp-tabs>
            <div class="detail">
              <div class="actions">
                <a href="#">${smallIcon("refresh")}<span>Detayı Güncelle</span></a>
                <a href="#">${smallIcon("calc")}<span>Hesapla</span></a>
                <hr>
                <a href="#">${smallIcon("calc")}<span>Hepsini Hesapla</span></a>
                <a href="#">${smallIcon("sync")}<span>Hepsini Güncelle</span></a>
                <a href="#">${smallIcon("spin")}<span>Hepsini Güncelle ve Hesa...</span></a>
              </div>
              ${groups.map(g => html`<div class="fields ${g.name}">${g.fields.map(f => this.field(f))}</div>`)}
            </div>
          </div>
        </div>
      </div>
    </section>`;
  }

  render() {
    return html`${defs}
      <div class="desk-top"></div>
      ${this.mainWindow()}
      ${this.dialog()}
      <div class="frame"></div>
      ${marks.map(([n, x, y]) => html`<span class="guide" style=${styleMap({ left: `${x}px`, top: `${y}px` })}>${n}</span>`)}
      <div class="desk-bottom"><i></i></div>`;
  }
}
